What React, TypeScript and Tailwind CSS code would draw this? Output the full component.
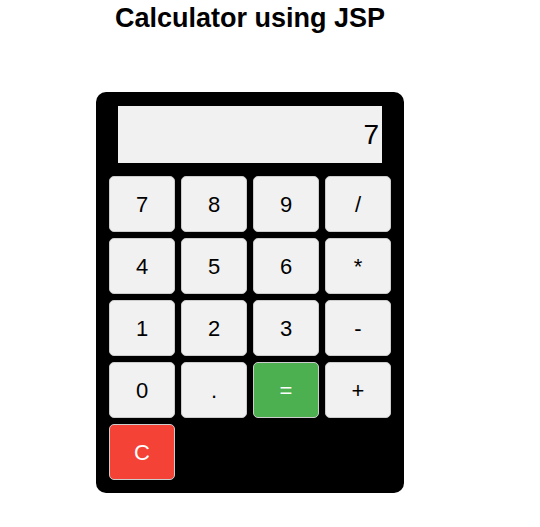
import React from "react";

const rows: string[][] = [
  ["7", "8", "9", "/"],
  ["4", "5", "6", "*"],
  ["1", "2", "3", "-"],
  ["0", ".", "=", "+"],
];

export default function App() {
  return (
    <div className="w-[540px] h-[527px] bg-white" style={{ fontFamily: '"Liberation Sans", Arial, sans-serif' }}>
      <div className="w-[500px] flex flex-col items-center">
        <h2 className="mt-[3px] text-[27px] leading-[31px] font-bold text-black">Calculator using JSP</h2>
        <div className="mt-[58px] w-[308px] bg-black rounded-[10px] px-[13px] pt-[14px] pb-[13px] flex flex-col items-center">
          <div className="w-[264px] h-[57px] bg-[#f1f1f1] flex items-center justify-end pr-[3px] text-[28px] text-black">
            7
          </div>
          <div className="mt-[13px] grid grid-cols-[repeat(4,66px)] grid-rows-[repeat(5,56px)] gap-[6px]">
            {rows.flat().map((k) => (
              <button
                key={k}
                className={
                  k === "="
                    ? "rounded-[5px] border border-[#ccc] bg-[#4caf50] text-white text-[22px] flex items-center justify-center"
                    : "rounded-[5px] border border-[#ccc] bg-[#f1f1f1] text-black text-[22px] flex items-center justify-center"
                }
              >
                {k}
              </button>
            ))}
            <button className="rounded-[5px] border border-[#ccc] bg-[#f44336] text-white text-[22px] flex items-center justify-center">
              C
            </button>
          </div>
        </div>
      </div>
    </div>
  );
}
